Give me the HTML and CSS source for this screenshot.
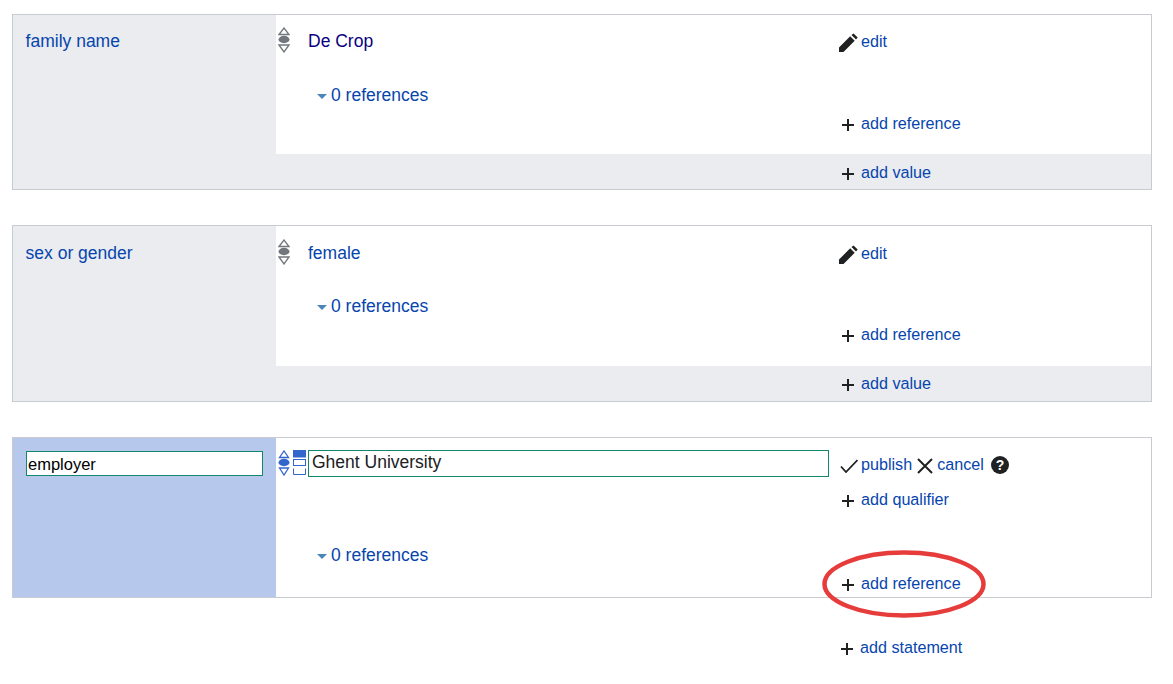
FILE: index.html
```html
<!DOCTYPE html>
<html lang="en">
<head>
<meta charset="utf-8">
<title>Statements</title>
<link rel="stylesheet" href="styles.css">
</head>
<body>
<main class="page">
  <section class="group">
    <div class="prop"><a class="prop-link">family name</a></div>
    <div class="main">
      <div class="statement">
        <div class="row row-value">
          <svg class="rank" viewBox="0 0 12 26"><path class="rank-line" d="M1 7.500 6 1 11 7.500zM1 18 6 25 11 18z"/><ellipse class="rank-dot" cx="6" cy="12.500" rx="5.500" ry="3.700"/></svg>
          <span class="value value-visited">De Crop</span>
          <div class="actions"><svg class="ico ico-pencil" viewBox="0 0 20 20"><path d="M1 19v-4.500L12.200 3.300l4.500 4.500L5.500 19zM13.500 2l2-1.600 4.200 4.200L18 6.500z"/></svg><a class="link">edit</a></div>
        </div>
        <div class="row row-refs">
          <span></span>
          <a class="refs"><i class="tri"></i>0 references</a>
          <div class="actions actions-add"><svg class="ico ico-plus" viewBox="0 0 12 12"><path d="M5 0h2v5h5v2H7v5H5V7H0V5h5z"/></svg><a class="link">add reference</a></div>
        </div>
      </div>
      <div class="add-value"><div class="actions actions-add"><svg class="ico ico-plus" viewBox="0 0 12 12"><path d="M5 0h2v5h5v2H7v5H5V7H0V5h5z"/></svg><a class="link">add value</a></div></div>
    </div>
  </section>

  <section class="group">
    <div class="prop prop-low"><a class="prop-link">sex or gender</a></div>
    <div class="main">
      <div class="statement">
        <div class="row row-value row-value-low">
          <svg class="rank" viewBox="0 0 12 26"><path class="rank-line" d="M1 7.500 6 1 11 7.500zM1 18 6 25 11 18z"/><ellipse class="rank-dot" cx="6" cy="12.500" rx="5.500" ry="3.700"/></svg>
          <a class="value">female</a>
          <div class="actions"><svg class="ico ico-pencil" viewBox="0 0 20 20"><path d="M1 19v-4.500L12.200 3.300l4.500 4.500L5.500 19zM13.500 2l2-1.600 4.200 4.200L18 6.500z"/></svg><a class="link">edit</a></div>
        </div>
        <div class="row row-refs row-refs-tall">
          <span></span>
          <a class="refs"><i class="tri"></i>0 references</a>
          <div class="actions actions-add"><svg class="ico ico-plus" viewBox="0 0 12 12"><path d="M5 0h2v5h5v2H7v5H5V7H0V5h5z"/></svg><a class="link">add reference</a></div>
        </div>
      </div>
      <div class="add-value add-value-tight"><div class="actions actions-add"><svg class="ico ico-plus" viewBox="0 0 12 12"><path d="M5 0h2v5h5v2H7v5H5V7H0V5h5z"/></svg><a class="link">add value</a></div></div>
    </div>
  </section>

  <section class="group group-edit">
    <div class="prop prop-edit"><input class="field field-prop" value="employer"></div>
    <div class="main">
      <div class="statement">
        <div class="row row-edit">
          <div class="rank-edit">
            <svg class="rank-small" viewBox="0 0 12 26"><path class="rank-line-blue" d="M1.500 7.500 6 1 10.500 7.500zM1.500 18 6 25 10.500 18z"/><ellipse class="rank-dot-blue" cx="6" cy="12.500" rx="5.500" ry="3.700"/></svg>
            <svg class="snak" viewBox="0 0 13 25"><rect class="snak-fill" x="0" y="0" width="13" height="7.500"/><rect class="snak-line" x=".5" y="9.500" width="12" height="6"/><path class="snak-line" d="M.5 18.500v6h12v-6"/></svg>
          </div>
          <input class="field field-value" value="Ghent University">
          <div class="edit-actions">
            <div class="actions actions-edit">
              <svg class="ico ico-check" viewBox="0 0 18 14"><path d="M1 7.500 6 13 17.500 1"/></svg><a class="link">publish</a>
              <svg class="ico ico-close" viewBox="0 0 16 16"><path d="M1 1 15 15M15 1 1 15"/></svg><a class="link">cancel</a>
              <svg class="ico ico-help" viewBox="0 0 18 18"><circle cx="9" cy="9" r="9"/><text class="help-mark" x="9" y="13.800" text-anchor="middle">?</text></svg>
            </div>
            <div class="actions actions-add actions-qual"><svg class="ico ico-plus" viewBox="0 0 12 12"><path d="M5 0h2v5h5v2H7v5H5V7H0V5h5z"/></svg><a class="link">add qualifier</a></div>
          </div>
        </div>
        <div class="row row-refs row-refs-edit">
          <span></span>
          <a class="refs"><i class="tri"></i>0 references</a>
          <div class="actions actions-add"><svg class="ico ico-plus" viewBox="0 0 12 12"><path d="M5 0h2v5h5v2H7v5H5V7H0V5h5z"/></svg><a class="link">add reference</a></div>
        </div>
      </div>
    </div>
  </section>

  <div class="add-statement"><div class="actions actions-add"><svg class="ico ico-plus" viewBox="0 0 12 12"><path d="M5 0h2v5h5v2H7v5H5V7H0V5h5z"/></svg><a class="link">add statement</a></div></div>

  <svg class="highlight" viewBox="0 0 166 70"><ellipse cx="83" cy="35" rx="79.500" ry="31.500"/></svg>
</main>
</body>
</html>
```

FILE: styles.css
```css
* { box-sizing: border-box; }
html, body { margin: 0; padding: 0; background: #fff; }
body {
  font-family: "Liberation Sans", Arial, sans-serif;
  font-size: 16.15px;
  color: #202122;
  overflow: hidden;
  height: 684px;
}
.page { position: relative; padding: 14px 21px 0 12px; height: 684px; }
a { color: #0645ad; }

.group {
  display: flex;
  border: 1px solid #c8ccd1;
  margin-bottom: 35px;
}
.prop {
  width: 263px;
  flex: none;
  background: #eaecf0;
  padding: 16px 12.6px;
}
.prop-low { padding-top: 17px; }
.prop-link { font-size: 17.5px; line-height: 21px; display: block; }
.prop-edit { background: #b6c8eb; padding: 13px 13px; }
.main { flex: 1; display: flex; flex-direction: column; min-width: 0; }

.row {
  display: grid;
  grid-template-columns: 32px 522px 1fr;
  align-items: start;
}
.row-value { height: 54px; padding-top: 16px; }
.row-value-low { padding-top: 17px; }
.row-refs { height: 85px; padding-top: 16px; }
.row-refs-tall { height: 86px; }
.row-edit { height: 85px; padding-top: 12px; }
.row-refs-edit { height: 74px; padding-top: 22px; }

.rank { display: block; width: 12px; height: 26px; margin: -4px 0 0 2px; }
.rank-line { fill: #fff; stroke: #72777d; stroke-width: 1.3; }
.rank-dot { fill: #72777d; }
.rank-small { display: block; width: 12px; height: 26px; }
.rank-line-blue { fill: #fff; stroke: #36c; stroke-width: 1.3; }
.rank-dot-blue { fill: #36c; }
.rank-edit { display: flex; gap: 3px; margin-left: 2px; }
.snak { display: block; width: 13px; height: 25px; }
.snak-fill { fill: #36c; }
.snak-line { fill: none; stroke: #36c; stroke-width: 1; }

.value { font-size: 17.5px; line-height: 21px; display: block; }
.value-visited { color: #0b0080; }

.refs {
  font-size: 17.5px;
  line-height: 21px;
  display: flex;
  align-items: center;
  margin-left: 9px;
}
.tri {
  width: 0;
  height: 0;
  border-left: 5px solid transparent;
  border-right: 5px solid transparent;
  border-top: 5px solid #4a86b8;
  margin-right: 4px;
  margin-top: 1px;
}

.actions { display: flex; align-items: center; padding-left: 8px; line-height: 21px; height: 21px; }
.actions-add { padding-left: 12px; margin-top: 28px; }
.add-value .actions-add, .add-statement .actions-add { margin-top: 0; }
.link { display: block; }
.ico { display: block; flex: none; fill: #202122; }
.ico-pencil { width: 20px; height: 20px; margin-right: 3px; margin-top: 2px; }
.ico-plus { width: 12px; height: 12px; margin-right: 7px; margin-top: 2px; }

.add-value {
  background: #eaecf0;
  height: 35px;
  padding: 8px 0 0 554px;
}
.add-value-tight { padding-top: 7px; }

.field {
  display: block;
  font-family: "Liberation Sans", Arial, sans-serif;
  border: 1px solid #14866d;
  background: #fff;
  padding: 0 1px;
  margin: 0;
  outline: none;
  color: #000;
}
.field-prop { width: 237px; height: 25px; font-size: 16.5px; padding-top: 1px; }
.field-value { width: 521px; height: 27px; font-size: 17.5px; padding: 0 3px 3px; color: #202122; }

.actions-edit { margin-top: 4px; }
.ico-check { width: 18px; height: 14px; margin: 3px 3px 0 2px; fill: none; stroke: #202122; stroke-width: 1.8; }
.ico-close { width: 16px; height: 16px; margin: 2px 4px 0 5px; fill: none; stroke: #202122; stroke-width: 2; }
.ico-help { width: 18px; height: 18px; margin-left: 7px; fill: #202122; }
.help-mark { fill: #fff; font-size: 14px; font-weight: bold; font-family: "Liberation Sans", Arial, sans-serif; }
.actions-qual { margin-top: 14px; }

.add-statement { padding: 5px 0 0 818px; margin-top: -1px; }
.add-statement .actions-add { padding-left: 11px; }

.highlight {
  position: absolute;
  left: 821px;
  top: 549px;
  width: 166px;
  height: 70px;
  pointer-events: none;
}
.highlight ellipse { fill: none; stroke: #e63c3c; stroke-width: 4.5; }
```
